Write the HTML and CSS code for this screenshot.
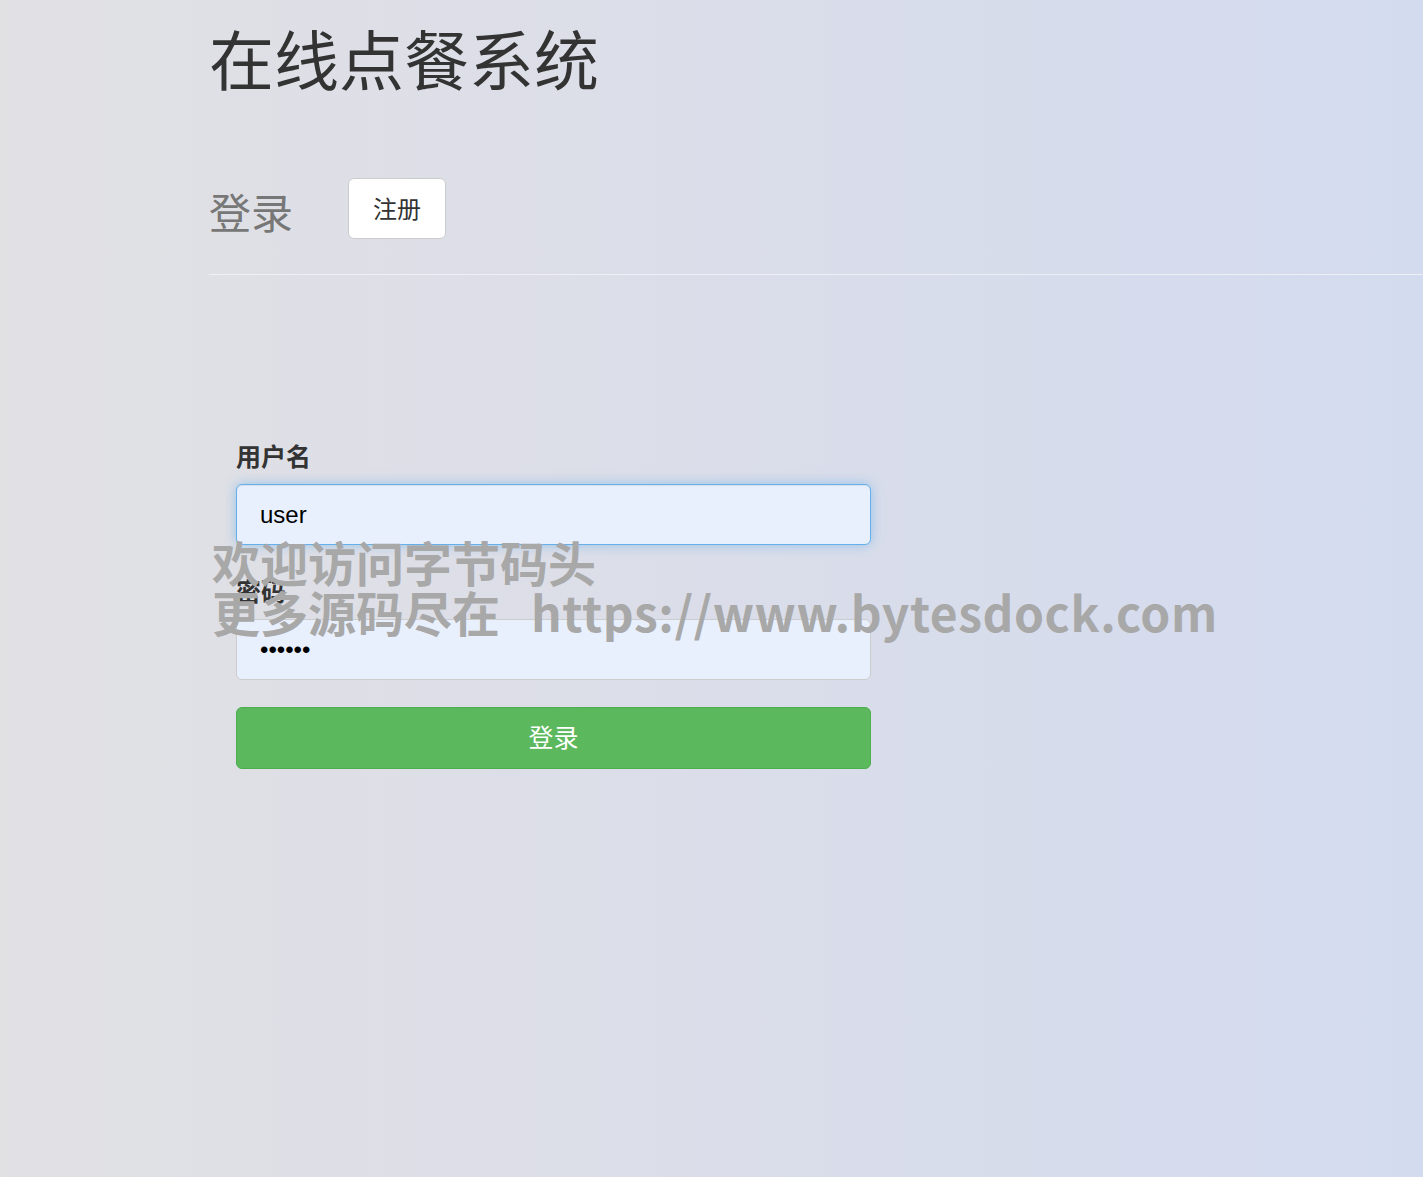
FILE: index.html
```html
<!DOCTYPE html>
<html lang="zh-CN">
<head>
    <meta charset="UTF-8">
    <meta name="viewport" content="width=device-width, initial-scale=1.0">
    <title>在线点餐系统</title>
    <link rel="stylesheet" href="styles.css">
</head>
<body>
    <div class="page">
        <h1 class="site-title">在线点餐系统</h1>
        <div class="tabs">
            <span class="tab-current">登录</span>
            <button class="tab-button">注册</button>
        </div>
        <hr class="divider">
        <form class="login-form" onsubmit="return false;">
            <div class="form-group">
                <label for="username">用户名</label>
                <input type="text" id="username" class="form-input focused" value="user">
            </div>
            <div class="form-group">
                <label for="password">密码</label>
                <input type="password" id="password" class="form-input" value="123456">
            </div>
            <button class="submit-button">登录</button>
        </form>
    </div>
    <div class="watermark">
        <p>欢迎访问字节码头</p>
        <p>更多源码尽在<span class="watermark-url">https://www.bytesdock.com</span></p>
    </div>
</body>
</html>
```

FILE: styles.css
```css
html, body {
    margin: 0;
    min-height: 100%;
}
body {
    background: linear-gradient(to right, #e1e1e4 0%, #dcdee8 40%, #d3dbef 100%);
    min-height: 1177px;
    font-family: "Liberation Sans", "Noto Sans CJK SC", sans-serif;
    color: #333;
}
.page {
    padding-left: 209px;
    padding-top: 18px;
}
.site-title {
    font-family: "Noto Sans CJK SC", sans-serif;
    font-weight: 400;
    font-size: 65px;
    line-height: 78px;
    margin: 0;
    color: #333;
}
.tabs {
    display: flex;
    align-items: center;
    margin-top: 82px;
    height: 61px;
}
.tab-current {
    font-family: "Noto Sans CJK SC", sans-serif;
    font-size: 42px;
    color: #777;
    width: 139px;
    margin-top: 4px;
}
.tab-button {
    font-family: "Noto Sans CJK SC", sans-serif;
    font-size: 24px;
    color: #333;
    background-color: #fff;
    border: 1px solid #ccc;
    border-radius: 6px;
    width: 98px;
    height: 61px;
    padding: 0 0 2px 0;
    cursor: pointer;
}
.divider {
    border: none;
    border-top: 1px solid #eef0f5;
    margin: 35px 0 0 0;
}
.login-form {
    width: 635px;
    margin-left: 27px;
    margin-top: 163px;
}
.form-group {
    margin-bottom: 28px;
}
.form-group label {
    display: block;
    font-family: "Noto Sans CJK SC", sans-serif;
    font-weight: 700;
    font-size: 25px;
    line-height: 34px;
    margin-bottom: 12px;
    color: #333;
}
.form-input {
    display: block;
    box-sizing: border-box;
    width: 100%;
    height: 61px;
    padding: 0 23px;
    font-family: "Liberation Sans", sans-serif;
    font-size: 24px;
    color: #000;
    background-color: #e8f0fe;
    border: 1px solid #ccc;
    border-radius: 6px;
    outline: none;
}
.form-input.focused {
    border-color: #66afe9;
    box-shadow: inset 0 1px 1px rgba(0, 0, 0, .075), 0 0 12px rgba(102, 175, 233, .6);
}
.submit-button {
    display: block;
    width: 100%;
    height: 62px;
    margin-top: -1px;
    padding: 0 0 4px 0;
    font-family: "Noto Sans CJK SC", sans-serif;
    font-size: 25px;
    color: #fff;
    background-color: #5cb85c;
    border: 1px solid #4cae4c;
    border-radius: 6px;
    cursor: pointer;
}
.watermark {
    position: absolute;
    left: 212px;
    top: 536px;
    pointer-events: none;
}
.watermark p {
    margin: 0;
    font-family: "Noto Sans CJK SC", sans-serif;
    font-weight: 700;
    font-size: 48px;
    line-height: 50px;
    color: #a8a8a8;
    white-space: nowrap;
}
.watermark-url {
    margin-left: 31px;
    letter-spacing: 0.55px;
}
```
